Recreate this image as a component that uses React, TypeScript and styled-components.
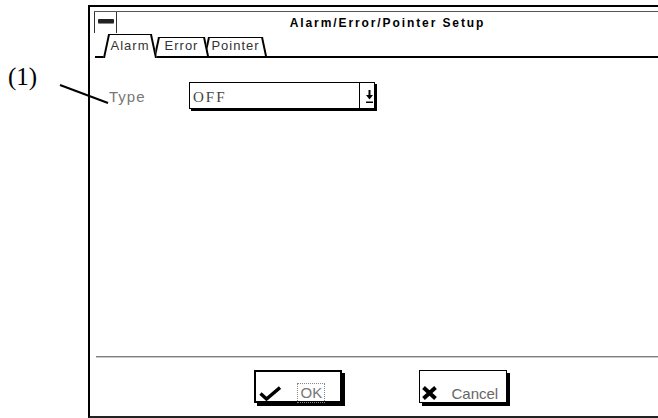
import React from 'react';
import styled, { createGlobalStyle } from 'styled-components';

const GlobalStyle = createGlobalStyle`
  html, body {
    margin: 0;
    padding: 0;
    background: #fff;
  }
  body {
    width: 658px;
    height: 418px;
    overflow: hidden;
    font-family: "Liberation Sans", Arial, sans-serif;
  }
`;

const Page = styled.div`
  position: relative;
  display: flex;
  height: 418px;
  padding-top: 5px;
  box-sizing: border-box;
`;

const Callout = styled.div`
  flex: none;
  width: 88px;
  padding: 58px 0 0 8px;
  box-sizing: border-box;
  font-family: "Liberation Serif", "Times New Roman", serif;
  font-size: 25px;
  line-height: 28px;
  color: #000;
`;

const Leader = styled.svg`
  position: absolute;
  left: 0;
  top: 0;
  pointer-events: none;
  z-index: 5;
`;

const Window = styled.div`
  flex: none;
  width: 572px;
  height: 413px;
  box-sizing: border-box;
  border: 2px solid #000;
  border-bottom-color: #222;
  padding-top: 4px;
  display: flex;
  flex-direction: column;
`;

const TitleBar = styled.div`
  display: flex;
  height: 22px;
  margin-left: 4px;
  box-sizing: border-box;
  border-top: 1px solid #555;
`;

const MenuBox = styled.div`
  flex: none;
  width: 23px;
  box-sizing: border-box;
  border-left: 1px solid #333;
  border-right: 1px solid #333;
  display: flex;
  justify-content: center;
  padding-top: 7px;
`;

const MenuDash = styled.div`
  width: 16px;
  height: 4px;
  box-sizing: border-box;
  background: #222;
  border-radius: 1px;
  box-shadow: 0 1px 0 #888;
`;

const Title = styled.div`
  flex: 1;
  text-align: center;
  padding-top: 4px;
  font-size: 12px;
  line-height: 14px;
  font-weight: bold;
  letter-spacing: 1.9px;
  color: #000;
`;

const TabStrip = styled.div`
  display: flex;
  align-items: flex-end;
  height: 25px;
  box-sizing: border-box;
  margin-left: 5px;
  padding-left: 8px;
  border-bottom: 2px solid #000;
`;

const Tab = styled.div<{ $active?: boolean; $width: number; $z: number; $shift?: number }>`
  position: relative;
  z-index: ${(p) => p.$z};
  flex: none;
  width: ${(p) => p.$width}px;
  height: ${(p) => (p.$active ? 24 : 19)}px;
  margin-bottom: ${(p) => (p.$active ? -2 : 0)}px;
  margin-left: ${(p) => p.$shift ?? 0}px;
  display: flex;
  align-items: flex-end;
  justify-content: center;
  padding-bottom: ${(p) => (p.$active ? 6 : 4)}px;
  box-sizing: border-box;

  &::before,
  &::after {
    content: '';
    position: absolute;
    top: 0;
    bottom: 0;
    width: 56%;
    background: #fff;
    border-top: 1px solid #000;
    z-index: -1;
  }
  &::before {
    left: 0;
    border-left: 2px solid #000;
    transform-origin: left bottom;
    transform: skewX(-12deg);
  }
  &::after {
    right: 0;
    border-right: 2px solid #000;
    transform-origin: right bottom;
    transform: skewX(12deg);
  }
`;

const TabLabel = styled.span`
  font-size: 13px;
  line-height: 13px;
  letter-spacing: 1px;
  color: #333;
`;

const Body = styled.div`
  flex: 1;
  padding: 24px 0 0 19px;
`;

const FieldRow = styled.div`
  display: flex;
  align-items: flex-start;
`;

const FieldLabel = styled.div`
  width: 80px;
  padding-top: 6px;
  font-size: 15px;
  line-height: 17px;
  letter-spacing: 1px;
  color: #777;
`;

const Select = styled.div`
  display: flex;
  width: 186px;
  height: 27px;
  box-sizing: border-box;
  border: 1px solid #000;
  box-shadow: 2px 2px 0 #000;
`;

const SelectValue = styled.div`
  flex: 1;
  padding: 7px 0 0 3px;
  font-family: "Liberation Serif", "Times New Roman", serif;
  font-size: 15px;
  line-height: 15px;
  letter-spacing: 2px;
  color: #444;
`;

const SelectButton = styled.div`
  flex: none;
  width: 15px;
  border-left: 1px solid #000;
  display: flex;
  justify-content: center;
  padding: 7px 0 0 4px;
  box-sizing: border-box;
`;

const Footer = styled.div`
  flex: none;
  height: 60px;
  box-sizing: border-box;
  margin-left: 6px;
  border-top: 1px solid #808080;
  display: flex;
  flex-direction: column;
`;

const FooterShade = styled.div`
  height: 1px;
  background: #c8c8c8;
`;

const ButtonRow = styled.div`
  display: flex;
  justify-content: center;
  gap: 77px;
  padding: 12px 0 0 6px;
`;

const Button = styled.div<{ $default?: boolean }>`
  width: 88px;
  height: 33px;
  box-sizing: border-box;
  border: ${(p) => (p.$default ? 2 : 1)}px solid #000;
  box-shadow: 3px 3px 0 #000;
  background: #fff;
  display: flex;
  align-items: center;
  padding: 13px 0 0 ${(p) => (p.$default ? 3 : 1)}px;
`;

const FocusRing = styled.span`
  margin-left: 16px;
  padding: 1px 2px 2px 3px;
  border: 1px dotted #888;
  font-size: 15px;
  line-height: 15px;
  color: #777;
`;

const ButtonText = styled.span`
  margin-left: 14px;
  font-size: 15px;
  line-height: 15px;
  color: #666;
`;

const CheckIcon = () => (
  <svg width="22" height="15" viewBox="0 0 22 15">
    <path d="M1.5 7.5 L7.5 13 L21 1.5" fill="none" stroke="#000" strokeWidth="3.4" />
  </svg>
);

const CrossIcon = () => (
  <svg width="17" height="14" viewBox="0 0 17 14">
    <path d="M2.5 1.5 L14.5 12.5 M14.5 1.5 L2.5 12.5" fill="none" stroke="#000" strokeWidth="4" />
  </svg>
);

const DropArrow = () => (
  <svg width="7" height="14" viewBox="0 0 7 14">
    <path d="M2.5 0 H4.5 V5 H7 L3.5 9.5 L0 5 H2.5 Z" fill="#000" />
    <rect x="0" y="11.5" width="7" height="1.5" fill="#000" />
  </svg>
);

const App = () => (
  <>
    <GlobalStyle />
    <Page>
      <Callout>(1)</Callout>
      <Leader width="120" height="120">
        <line x1="60" y1="85" x2="108" y2="103" stroke="#000" strokeWidth="2" />
      </Leader>
      <Window>
        <TitleBar>
          <MenuBox>
            <MenuDash />
          </MenuBox>
          <Title>Alarm/Error/Pointer Setup</Title>
        </TitleBar>
        <TabStrip>
          <Tab $active $width={54} $z={3}>
            <TabLabel>Alarm</TabLabel>
          </Tab>
          <Tab $width={55} $z={2} $shift={-3}>
            <TabLabel>Error</TabLabel>
          </Tab>
          <Tab $width={63} $z={1} $shift={-5}>
            <TabLabel>Pointer</TabLabel>
          </Tab>
        </TabStrip>
        <Body>
          <FieldRow>
            <FieldLabel>Type</FieldLabel>
            <Select>
              <SelectValue>OFF</SelectValue>
              <SelectButton>
                <DropArrow />
              </SelectButton>
            </Select>
          </FieldRow>
        </Body>
        <Footer>
          <FooterShade />
          <ButtonRow>
            <Button $default>
              <CheckIcon />
              <FocusRing>OK</FocusRing>
            </Button>
            <Button>
              <CrossIcon />
              <ButtonText>Cancel</ButtonText>
            </Button>
          </ButtonRow>
        </Footer>
      </Window>
    </Page>
  </>
);

export default App;
